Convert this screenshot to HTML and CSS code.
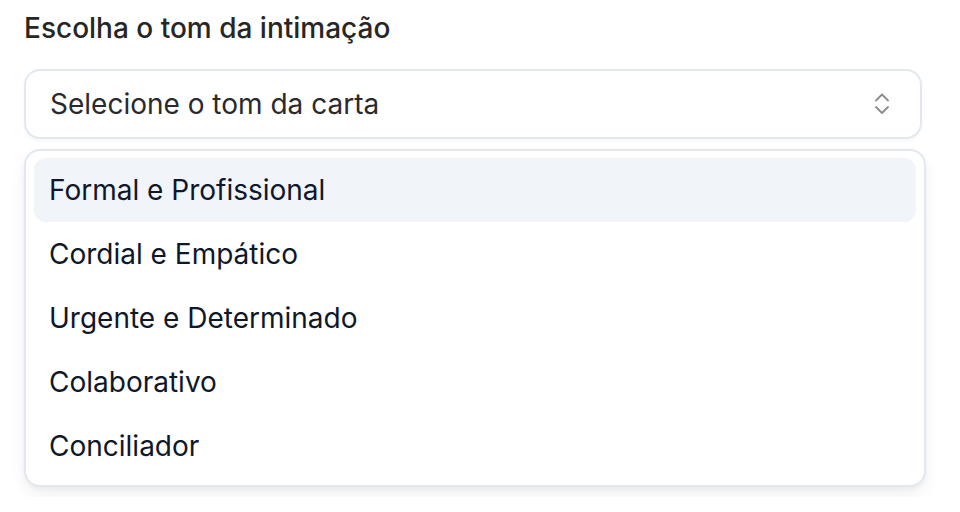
FILE: index.html
```html
<!DOCTYPE html>
<html lang="pt">
<head>
<meta charset="utf-8">
<meta name="viewport" content="width=device-width, initial-scale=1.0">
<link rel="stylesheet" href="styles.css">
</head>
<body>
  <div class="field">
    <label class="field-label">Escolha o tom da intimação</label>

    <button class="select-trigger">
      <span class="placeholder">Selecione o tom da carta</span>
      <svg class="chevrons" width="16" height="22" viewBox="0 0 16 22" fill="none" stroke="currentColor" stroke-width="1.8" stroke-linecap="round" stroke-linejoin="round">
        <polyline points="2,7.5 8,1.5 14,7.5"></polyline>
        <polyline points="2,14 8,20 14,14"></polyline>
      </svg>
    </button>

    <div class="select-content">
      <div class="select-item active">Formal e Profissional</div>
      <div class="select-item">Cordial e Empático</div>
      <div class="select-item">Urgente e Determinado</div>
      <div class="select-item">Colaborativo</div>
      <div class="select-item">Conciliador</div>
    </div>
  </div>
</body>
</html>
```

FILE: styles.css
```css
body {
  margin: 0;
  background-color: #ffffff;
  font-family: Inter, "Noto Sans", sans-serif;
}

.field {
  padding: 10px 24px;
}

.field-label {
  display: block;
  font-size: 28px;
  line-height: 36px;
  font-weight: 500;
  color: #262626;
  margin-bottom: 23px;
}

.select-trigger {
  display: flex;
  align-items: center;
  justify-content: space-between;
  box-sizing: border-box;
  width: 898px;
  height: 70px;
  padding: 0 30px 0 24px;
  background-color: #ffffff;
  border: 2px solid #e2e8f0;
  border-radius: 16px;
  box-shadow: 0 2px 4px rgba(15, 23, 42, 0.04);
  font-family: inherit;
  cursor: pointer;
}

.placeholder {
  font-size: 28px;
  color: #2a2a2e;
}

.chevrons {
  color: #8b8b8b;
}

.select-content {
  box-sizing: border-box;
  width: 902px;
  margin-top: 10px;
  padding: 7px 8px;
  background-color: #ffffff;
  border: 2px solid #e2e8f0;
  border-radius: 16px;
  box-shadow: 0 8px 16px rgba(15, 23, 42, 0.06), 0 2px 4px rgba(15, 23, 42, 0.04);
}

.select-item {
  height: 64px;
  display: flex;
  align-items: center;
  padding-left: 15px;
  font-size: 28px;
  color: #0f172a;
  border-radius: 12px;
}

.select-item.active {
  background-color: #f1f5f9;
}
```
